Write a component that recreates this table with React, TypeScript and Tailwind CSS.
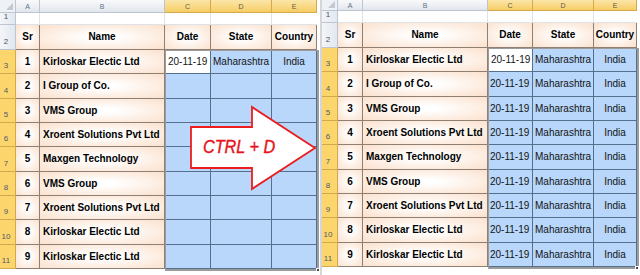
import React from "react";

const NAMES = [
  "Kirloskar Electic Ltd",
  "I Group of Co.",
  "VMS Group",
  "Xroent Solutions Pvt Ltd",
  "Maxgen Technology",
  "VMS Group",
  "Xroent Solutions Pvt Ltd",
  "Kirloskar Electic Ltd",
  "Kirloskar Electic Ltd",
];

const PEACH =
  "bg-[radial-gradient(ellipse_at_center,#ffffff_15%,#fbe1cd_100%)] border-r border-b border-[#8f8075]";

function ColHdr({ label, sel }: { label: string; sel?: boolean }) {
  return (
    <div
      className={
        sel
          ? "flex items-center justify-center text-[7px] leading-none border-r border-b border-[#d6aa4c] bg-linear-to-b from-[#fbe6a8] to-[#f6cd62] text-[#5f5a4c]"
          : "flex items-center justify-center text-[7px] leading-none border-r border-b border-[#bcc5d0] bg-linear-to-b from-[#f8f9fb] to-[#e2e6ec] text-[#62728a]"
      }
    >
      {label}
    </div>
  );
}

function RowHdr({ n, sel }: { n: number; sel?: boolean }) {
  return (
    <div
      className={
        sel
          ? "flex items-end justify-center pr-[3px] pb-[3px] text-[8px] leading-none border-r border-b border-[#d3a94e] bg-[#fcd66c] text-[#4f5966]"
          : "flex items-end justify-center pr-[3px] pb-[3px] text-[8px] leading-none border-r border-b border-[#bcc5d0] bg-linear-to-r from-[#f3f5f8] to-[#e3e8ef] text-[#3f5676]"
      }
    >
      {n}
    </div>
  );
}

function Corner() {
  return (
    <div className="relative border-r border-b border-[#bcc5d0] bg-[#eef1f5]">
      <svg className="absolute right-[2px] bottom-[2px]" width="7" height="7" viewBox="0 0 7 7">
        <polygon points="7,0 7,7 0,7" fill="#c3c9d1" />
      </svg>
    </div>
  );
}

function Sheet({ right }: { right?: boolean }) {
  const grid = right
    ? "grid grid-cols-[16px_25px_125px_45px_61px_43px] grid-rows-[11px_12px_25px_24px_25px_24px_24px_25px_24px_24px_25px_24px]"
    : "grid grid-cols-[16px_24px_125px_46px_61px_45px] grid-rows-[13px_12px_25px_24px_25px_24px_24px_25px_24px_24px_25px_24px]";
  const blue = "bg-[#b8d7fa] border-r border-b border-[#55708c]";
  const txt = "text-[10px] leading-none text-[#141414]";
  return (
    <div className={grid}>
      <Corner />
      <ColHdr label="A" />
      <ColHdr label="B" />
      <ColHdr label="C" sel />
      <ColHdr label="D" sel />
      <ColHdr label="E" sel />

      <RowHdr n={1} />
      <div className="border-r border-b border-[#dfe2e6] bg-white" />
      <div className="border-r border-b border-[#dfe2e6] bg-white" />
      <div className="border-r border-b border-[#dfe2e6] bg-white" />
      <div className="border-r border-b border-[#dfe2e6] bg-white" />
      <div className="border-b border-[#dfe2e6] bg-white" />

      <RowHdr n={2} />
      {["Sr", "Name", "Date", "State", "Country"].map((h) => (
        <div key={h} className={`${PEACH} flex items-center justify-center text-[10px] font-bold leading-none text-black`}>
          {h}
        </div>
      ))}

      {NAMES.map((name, i) => {
        const first = i === 0;
        const show = first || right;
        return (
          <React.Fragment key={i}>
            <RowHdr n={i + 3} sel />
            <div className={`${PEACH} flex items-center justify-center text-[10px] font-bold leading-none text-black`}>
              {i + 1}
            </div>
            <div className={`${PEACH} flex items-center pl-[3px] text-[10px] font-bold leading-none text-black whitespace-nowrap`}>
              {name}
            </div>
            <div
              className={
                first
                  ? `bg-white border-r border-b border-[#55708c] flex items-center pl-[3px] ${txt}`
                  : `${blue} flex items-center pl-[2px] ${txt}`
              }
            >
              {show ? "20-11-19" : ""}
            </div>
            <div className={`${blue} flex items-center pl-[2px] ${txt}`}>{show ? "Maharashtra" : ""}</div>
            <div className={`${blue} flex items-center justify-center ${txt}`}>{show ? "India" : ""}</div>
          </React.Fragment>
        );
      })}
    </div>
  );
}

export default function App() {
  return (
    <div className="relative flex w-[640px] h-[275px] overflow-hidden bg-white font-['Liberation_Sans',Arial,sans-serif]">
      <div className="relative w-[320px] shrink-0">
        <Sheet />
        <div className="absolute left-[165px] top-[50px] w-[154px] h-[221px] border-l border-t border-r-2 border-b-2 border-[#9c9c9c]" />
        <div className="absolute left-[316px] top-[268px] w-[4px] h-[4px] bg-[#4a4a4a] border border-white" />
      </div>
      <div className="w-[2px] shrink-0 bg-[#d4d6d9]" />
      <div className="relative shrink-0">
        <Sheet right />
        <div className="absolute left-[166px] top-[48px] w-[151px] h-[221px] border-l border-t border-r-2 border-b-2 border-[#9c9c9c]" />
        <div className="absolute left-[313px] top-[266px] w-[4px] h-[4px] bg-[#4a4a4a] border border-white" />
      </div>

      <div className="absolute left-[188px] top-[104px] w-[132px] h-[90px]">
        <svg width="132" height="90" viewBox="0 0 132 90" className="absolute inset-0">
          <polygon
            points="3,23 64,23 64,3 127,44 64,85 64,64 3,64"
            fill="#ffffff"
            stroke="#ee1c1c"
            strokeWidth="1.8"
            strokeLinejoin="miter"
          />
        </svg>
        <span className="absolute left-[15px] top-[34px] origin-left scale-x-90 text-[18px] leading-[18px] italic text-[#e8121b] whitespace-nowrap [-webkit-text-stroke:0.4px_#e8121b]">
          CTRL + D
        </span>
      </div>
    </div>
  );
}
